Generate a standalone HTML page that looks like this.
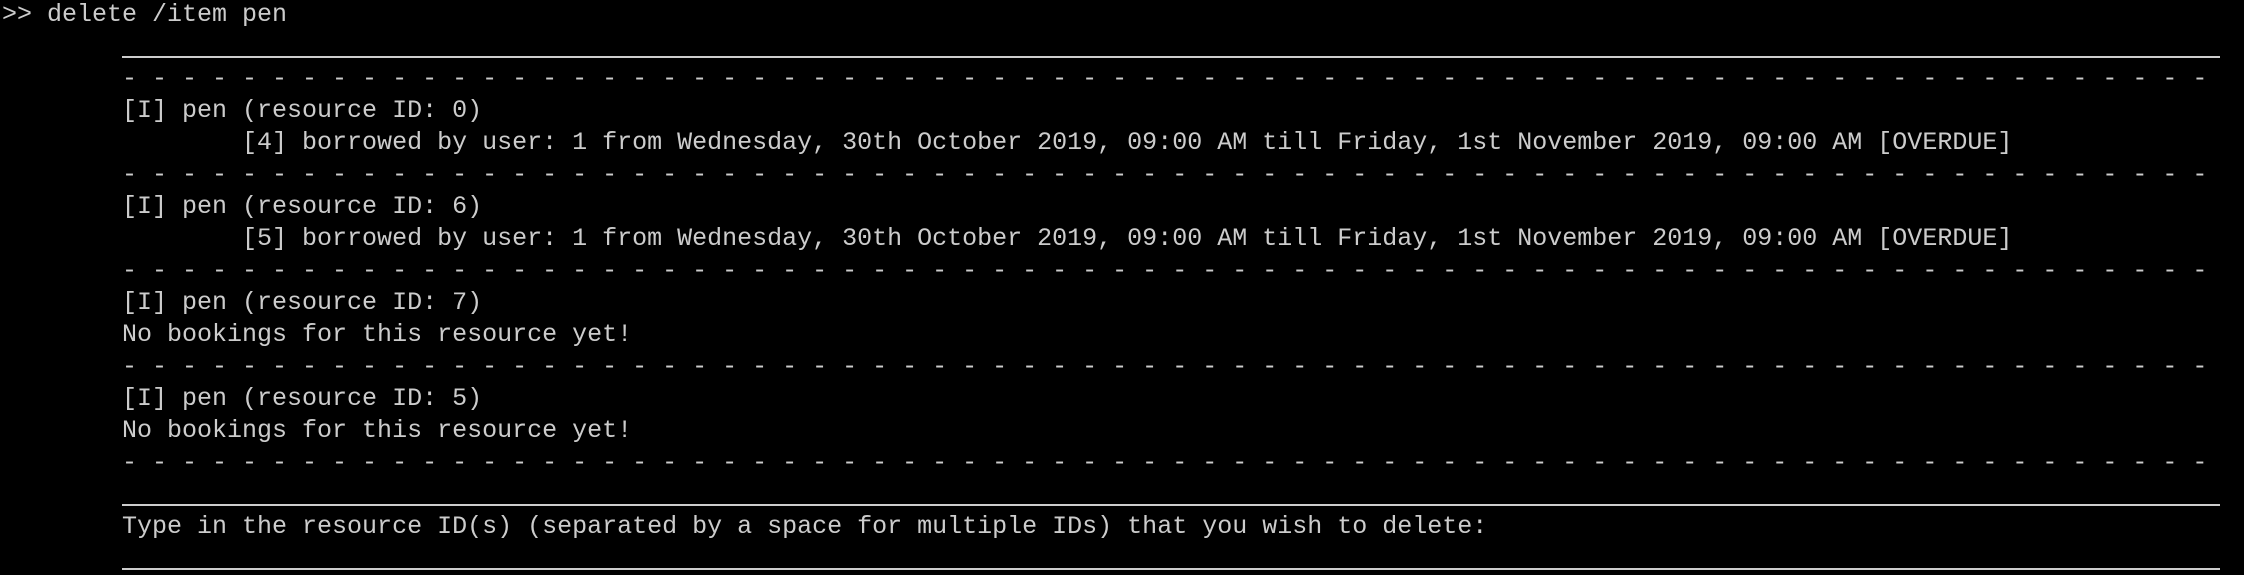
<!DOCTYPE html>
<html><head><meta charset="utf-8"><style>
html,body{margin:0;padding:0;background:#000;width:2244px;height:575px;overflow:hidden}
pre{margin:0;position:absolute;left:2px;top:-1px;font-family:"Liberation Mono",monospace;font-size:25px;line-height:32px;color:#cccccc}
.hl{position:absolute;left:122px;width:2098px;height:2px;background:#cccccc}
</style></head><body>
<pre>&gt;&gt; delete /item pen

        - - - - - - - - - - - - - - - - - - - - - - - - - - - - - - - - - - - - - - - - - - - - - - - - - - - - - - - - - - - - - - - - - - - - - -
        [I] pen (resource ID: 0)
                [4] borrowed by user: 1 from Wednesday, 30th October 2019, 09:00 AM till Friday, 1st November 2019, 09:00 AM [OVERDUE]
        - - - - - - - - - - - - - - - - - - - - - - - - - - - - - - - - - - - - - - - - - - - - - - - - - - - - - - - - - - - - - - - - - - - - - -
        [I] pen (resource ID: 6)
                [5] borrowed by user: 1 from Wednesday, 30th October 2019, 09:00 AM till Friday, 1st November 2019, 09:00 AM [OVERDUE]
        - - - - - - - - - - - - - - - - - - - - - - - - - - - - - - - - - - - - - - - - - - - - - - - - - - - - - - - - - - - - - - - - - - - - - -
        [I] pen (resource ID: 7)
        No bookings for this resource yet!
        - - - - - - - - - - - - - - - - - - - - - - - - - - - - - - - - - - - - - - - - - - - - - - - - - - - - - - - - - - - - - - - - - - - - - -
        [I] pen (resource ID: 5)
        No bookings for this resource yet!
        - - - - - - - - - - - - - - - - - - - - - - - - - - - - - - - - - - - - - - - - - - - - - - - - - - - - - - - - - - - - - - - - - - - - - -

        Type in the resource ID(s) (separated by a space for multiple IDs) that you wish to delete:
</pre>
<div class="hl" style="top:56px"></div>
<div class="hl" style="top:504px"></div>
<div class="hl" style="top:568px"></div>
</body></html>
